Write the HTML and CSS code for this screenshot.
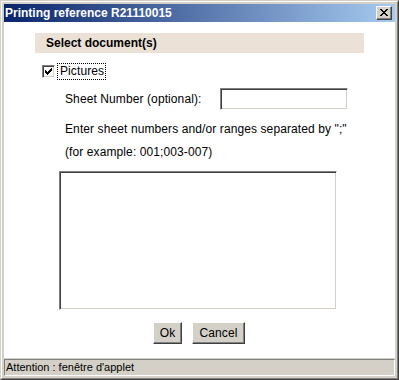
FILE: index.html
```html
<!DOCTYPE html>
<html>
<head>
<meta charset="utf-8">
<link rel="stylesheet" href="styles.css">
</head>
<body>
<div class="window">
  <div class="frame">
    <div class="titlebar">
      <span class="title">Printing reference R21110015</span>
      <span class="close"><svg width="8" height="7" viewBox="0 0 8 7"><path d="M0 0h2v1h1v1h2v-1h1v-1h2v1h-1v1h-1v1h-1v1h1v1h1v1h1v1h-2v-1h-1v-1h-2v1h-1v1h-2v-1h1v-1h1v-1h1v-1h-1v-1h-1v-1h-1z" fill="#000"/></svg></span>
    </div>
    <div class="content">
      <div class="band">Select document(s)</div>
      <div class="checkrow">
        <span class="checkbox"><svg width="7" height="7" viewBox="0 0 7 7"><path d="M0 2h1v1h1v1h1v-1h1v-1h1v-1h1v-1h1v3h-1v1h-1v1h-1v1h-1v1h-1v-1h-1v-1h-1z" fill="#000"/></svg></span>
        <span class="checklabel">Pictures</span>
      </div>
      <div class="sheetrow">
        <span class="sheetlabel">Sheet Number (optional):</span>
        <span class="input"></span>
      </div>
      <div class="hint">Enter sheet numbers and/or ranges separated by ";"</div>
      <div class="hint">(for example: 001;003-007)</div>
      <div class="textarea"></div>
      <div class="buttons">
        <span class="btn btn-ok">Ok</span>
        <span class="btn btn-cancel">Cancel</span>
      </div>
    </div>
    <div class="status">Attention : fenêtre d'applet</div>
  </div>
</div>
</body>
</html>
```
FILE: styles.css
```css
html, body {
  margin: 0;
  padding: 0;
  background: #d4d0c8;
}
.window {
  width: 399px;
  height: 380px;
  box-sizing: border-box;
  border-style: solid;
  border-width: 1px;
  border-color: #d4d0c8 #404040 #404040 #d4d0c8;
}
.frame {
  height: 100%;
  box-sizing: border-box;
  border-style: solid;
  border-width: 1px;
  border-color: #ffffff #808080 #808080 #ffffff;
  padding: 2px;
  background: #d4d0c8;
  display: flex;
  flex-direction: column;
  font-family: "Liberation Sans", Arial, sans-serif;
  color: #000;
}
.titlebar {
  height: 18px;
  flex: none;
  background: linear-gradient(to right, #0a246a, #a6caf0);
  display: flex;
  align-items: center;
  justify-content: space-between;
  padding: 0 3px 0 1px;
}
.title {
  color: #fff;
  font-weight: bold;
  font-size: 12px;
}
.close {
  width: 16px;
  height: 14px;
  box-sizing: border-box;
  background: #d4d0c8;
  border-style: solid;
  border-width: 1px;
  border-color: #ffffff #404040 #404040 #ffffff;
  box-shadow: inset -1px -1px 0 #808080;
  display: flex;
  align-items: center;
  justify-content: center;
  padding: 0 1px 1px 0;
}
.close svg { display: block; }
.content {
  flex: 1;
  background: #fff;
  display: flex;
  flex-direction: column;
  font-size: 12px;
  letter-spacing: 0.1px;
}
.band {
  margin: 11px 31px 0 31px;
  height: 20px;
  background: #ebe1d7;
  font-weight: bold;
  font-size: 12px;
  letter-spacing: 0;
  line-height: 20px;
  padding-left: 11px;
}
.checkrow {
  margin: 10px 0 0 38px;
  display: flex;
  align-items: center;
  height: 17px;
}
.checkbox {
  width: 13px;
  height: 13px;
  box-sizing: border-box;
  background: #fff;
  border-style: solid;
  border-width: 1px;
  border-color: #808080 #ffffff #ffffff #808080;
  box-shadow: inset 1px 1px 0 #404040, inset -1px -1px 0 #d4d0c8;
  display: flex;
  align-items: center;
  justify-content: center;
}
.checkbox svg { display: block; }
.checklabel {
  margin-left: 2px;
  padding: 0 1px 0 2px;
  line-height: 15px;
  border: 1px dotted #000;
}
.sheetrow {
  margin: 8px 0 0 61px;
  display: flex;
  align-items: center;
  height: 22px;
}
.sheetlabel {
  width: 155px;
}
.input {
  width: 128px;
  height: 22px;
  box-sizing: border-box;
  background: #fff;
  border-style: solid;
  border-width: 1px;
  border-color: #808080 #ffffff #ffffff #808080;
  box-shadow: inset 1px 1px 0 #404040, inset -1px -1px 0 #d4d0c8;
}
.hint {
  margin-left: 61px;
  height: 23px;
  line-height: 23px;
}
.sheetrow + .hint { margin-top: 8px; }
.textarea {
  margin: 7px 0 0 55px;
  width: 278px;
  height: 139px;
  box-sizing: border-box;
  background: #fff;
  border-style: solid;
  border-width: 1px;
  border-color: #808080 #ffffff #ffffff #808080;
  box-shadow: inset 1px 1px 0 #404040, inset -1px -1px 0 #d4d0c8;
}
.buttons {
  margin: 12px 0 0 149px;
  display: flex;
  gap: 10px;
}
.btn {
  height: 22px;
  box-sizing: border-box;
  background: #d4d0c8;
  border-style: solid;
  border-width: 1px;
  border-color: #ffffff #404040 #404040 #ffffff;
  box-shadow: inset -1px -1px 0 #808080;
  display: flex;
  align-items: center;
  justify-content: center;
  font-size: 12px;
}
.btn-ok { width: 29px; }
.btn-cancel { width: 53px; }
.status {
  flex: none;
  margin-top: 1px;
  height: 17px;
  box-sizing: border-box;
  border-style: solid;
  border-width: 1px;
  border-color: #808080 #ffffff #ffffff #808080;
  font-size: 11px;
  line-height: 15px;
  padding-left: 1px;
}
```
